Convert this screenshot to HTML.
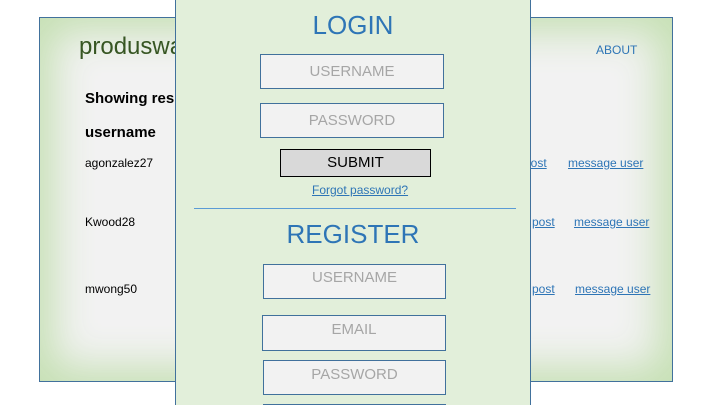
<!DOCTYPE html>
<html style="height:405px;overflow:hidden"><head><style>
body{margin:0;width:720px;height:405px;overflow:hidden;background:#fff;position:relative;font-family:"Liberation Sans",sans-serif}
.a{position:absolute;white-space:nowrap}
#back{position:absolute;left:39px;top:17px;width:632px;height:363px;border:1px solid #41719c;background:#f2f2f2;box-shadow:inset 0 0 40px 14px #c6e0b4}
#front{position:absolute;left:175px;top:-1px;width:354px;height:410px;background:#e2efda;border:1px solid #41719c;border-bottom:none}
.in{position:absolute;border:1px solid #41719c;background:#f2f2f2;color:#a6a6a6;font-size:15px;text-align:center;box-sizing:border-box}
.lk{color:#2e75b6;text-decoration:underline;font-size:12px}
</style></head><body>
<div id="back"></div>
<div class="a" style="left:79px;top:33px;font-size:24px;color:#375623">produswap</div>
<div class="a" style="left:596px;top:43px;font-size:12px;color:#2e75b6">ABOUT</div>
<div class="a" style="left:85px;top:90px;font-size:15px;font-weight:bold">Showing results</div>
<div class="a" style="left:85px;top:124px;font-size:15px;font-weight:bold">username</div>
<div class="a" style="left:85px;top:156px;font-size:12px">agonzalez27</div>
<div class="a" style="left:85px;top:215px;font-size:12px">Kwood28</div>
<div class="a" style="left:85px;top:282px;font-size:12px">mwong50</div>
<div class="a lk" style="left:524px;top:156px">post</div><div class="a lk" style="left:568px;top:156px">message user</div>
<div class="a lk" style="left:532px;top:215px">post</div><div class="a lk" style="left:574px;top:215px">message user</div>
<div class="a lk" style="left:532px;top:282px">post</div><div class="a lk" style="left:575px;top:282px">message user</div>
<div id="front"></div>
<div class="a" style="left:176px;width:354px;text-align:center;top:10px;font-size:26px;color:#2e75b6">LOGIN</div>
<div class="in" style="left:260px;top:54px;width:184px;height:35px;line-height:33px">USERNAME</div>
<div class="in" style="left:260px;top:103px;width:184px;height:35px;line-height:33px">PASSWORD</div>
<div class="in" style="left:280px;top:149px;width:151px;height:28px;line-height:26px;border-color:#000;background:#d9d9d9;color:#000">SUBMIT</div>
<div class="a lk" style="left:312px;top:183px">Forgot password?</div>
<div class="a" style="left:194px;top:208px;width:322px;height:1px;background:#5b9bd5"></div>
<div class="a" style="left:176px;width:354px;text-align:center;top:219px;font-size:26px;color:#2e75b6">REGISTER</div>
<div class="in" style="left:263px;top:264px;width:183px;height:35px;line-height:25px">USERNAME</div>
<div class="in" style="left:262px;top:315px;width:184px;height:36px;line-height:28px">EMAIL</div>
<div class="in" style="left:263px;top:360px;width:183px;height:35px;line-height:28px">PASSWORD</div>
<div class="in" style="left:263px;top:404px;width:183px;height:1px;border-bottom:none"></div>
</body></html>
